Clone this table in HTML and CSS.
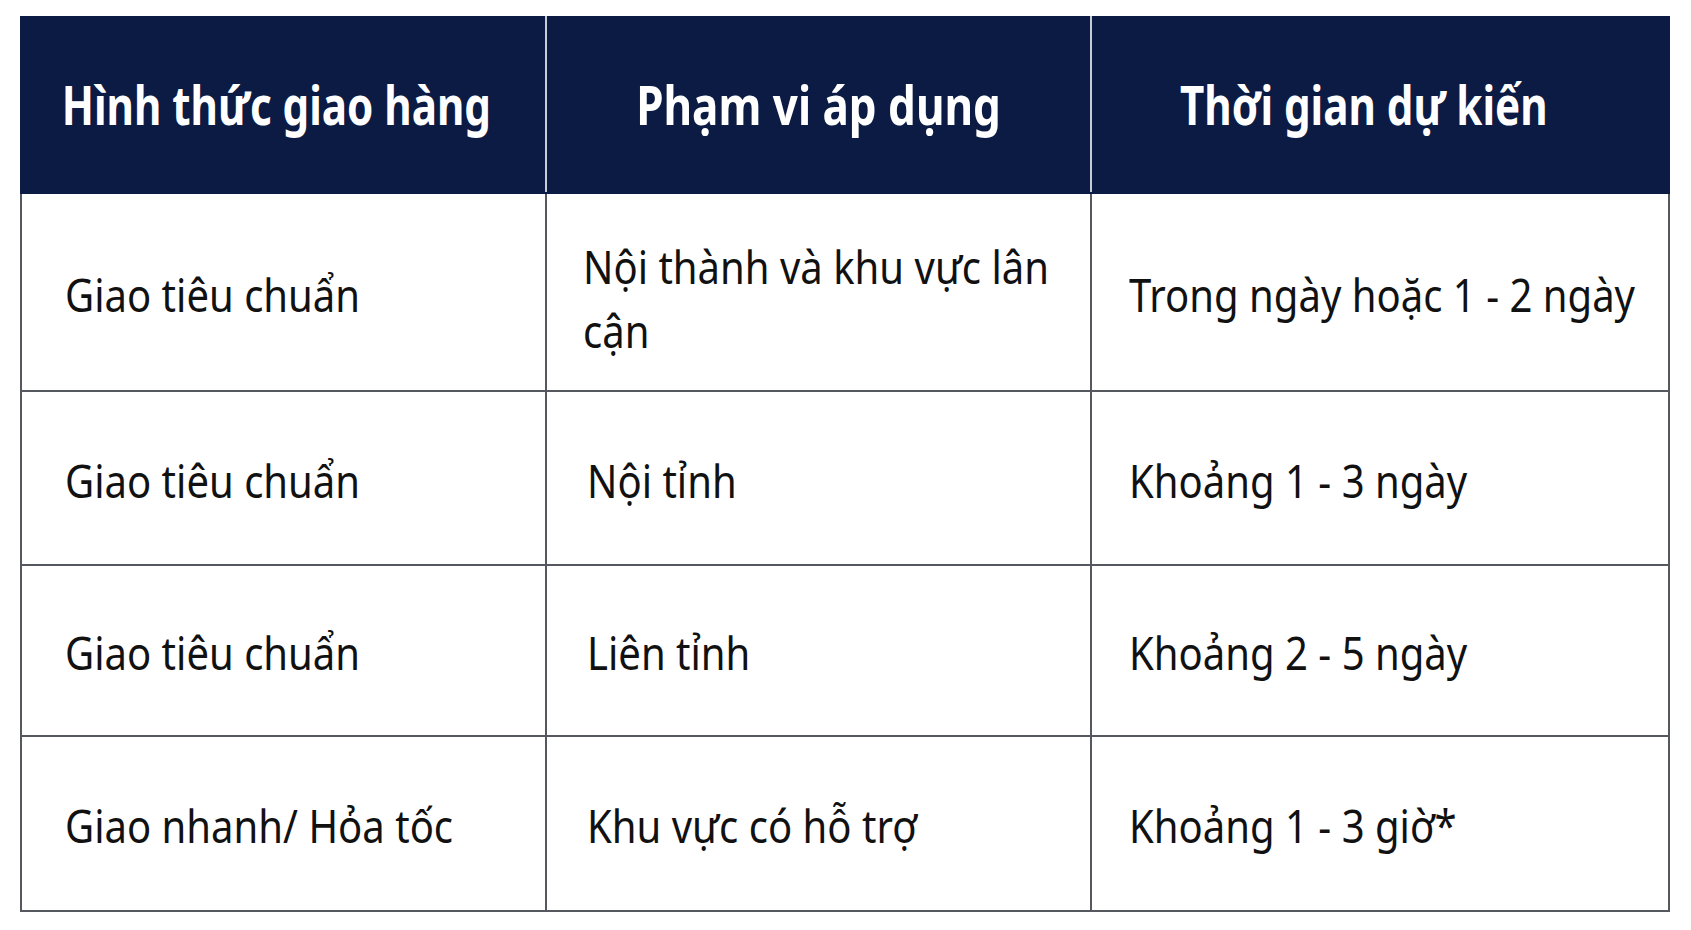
FILE: index.html
```html
<!DOCTYPE html>
<html lang="vi">
<head>
<meta charset="utf-8">
<title>Hình thức giao hàng</title>
<link rel="stylesheet" href="styles.css">
</head>
<body>
<table class="shipping">
  <colgroup>
    <col class="col-method">
    <col class="col-scope">
    <col class="col-time">
  </colgroup>
  <thead>
    <tr class="head-row">
      <th class="th-method"><span class="txt">Hình thức giao hàng</span></th>
      <th class="th-scope"><span class="txt">Phạm vi áp dụng</span></th>
      <th class="th-time"><span class="txt">Thời gian dự kiến</span></th>
    </tr>
  </thead>
  <tbody>
    <tr class="row-1">
      <td><span class="txt">Giao tiêu chuẩn</span></td>
      <td class="two-line"><span class="txt">Nội thành và khu vực lân cận</span></td>
      <td><span class="txt">Trong ngày hoặc 1 - 2 ngày</span></td>
    </tr>
    <tr class="row-2">
      <td><span class="txt">Giao tiêu chuẩn</span></td>
      <td><span class="txt">Nội tỉnh</span></td>
      <td><span class="txt">Khoảng 1 - 3 ngày</span></td>
    </tr>
    <tr class="row-3">
      <td><span class="txt">Giao tiêu chuẩn</span></td>
      <td><span class="txt">Liên tỉnh</span></td>
      <td><span class="txt">Khoảng 2 - 5 ngày</span></td>
    </tr>
    <tr class="row-4">
      <td><span class="txt">Giao nhanh/ Hỏa tốc</span></td>
      <td><span class="txt">Khu vực có hỗ trợ</span></td>
      <td><span class="txt">Khoảng 1 - 3 giờ*</span></td>
    </tr>
  </tbody>
</table>
</body>
</html>
```

FILE: styles.css
```css
html, body {
  margin: 0;
  background: #ffffff;
}

body {
  font-family: "Noto Sans", "Open Sans", sans-serif;
  color: #111111;
}

.shipping {
  border-collapse: collapse;
  table-layout: fixed;
  width: 1648px;
  margin: 16px 0 0 20px;
  border: 2px solid #4d5058;
}

.col-method { width: 525px; }
.col-scope { width: 545px; }
.col-time { width: 578px; }

.head-row { height: 176px; }
.row-1 { height: 198px; }
.row-2 { height: 174px; }
.row-3 { height: 171px; }
.row-4 { height: 175px; }

/* the lettering in the reference is narrower than Noto Sans:
   the text block is laid out wider and compressed back to the cell width */
.txt {
  display: block;
  transform-origin: left center;
}

.shipping th {
  background: #0b1b44;
  color: #ffffff;
  font-size: 53px;
  font-weight: 700;
  line-height: 60px;
  text-align: center;
  vertical-align: middle;
  padding: 0;
  border: 2px solid #0b1b44;
  border-right-color: #c9ccd4;
  white-space: nowrap;
}

.shipping th:last-child {
  border-right-color: #0b1b44;
}

.shipping .th-method { padding-right: 11px; }
.shipping .th-time { padding-right: 29px; }

.shipping th .txt {
  width: 125%;
  transform: scaleX(0.795);
}

.shipping .th-scope .txt {
  width: 120.5%;
  transform: scaleX(0.83);
}

.shipping td {
  font-size: 45px;
  font-weight: 400;
  line-height: 64px;
  text-align: left;
  vertical-align: middle;
  padding: 5px 28px 0 40px;
  border: 2px solid #55585f;
}

.shipping td.two-line {
  padding-top: 14px;
  padding-left: 36px;
}

.shipping td .txt {
  width: 112.36%;
  transform: scaleX(0.89);
}

.shipping td:first-child {
  padding-left: 43px;
}

.shipping td:last-child {
  padding-left: 37px;
}
```
